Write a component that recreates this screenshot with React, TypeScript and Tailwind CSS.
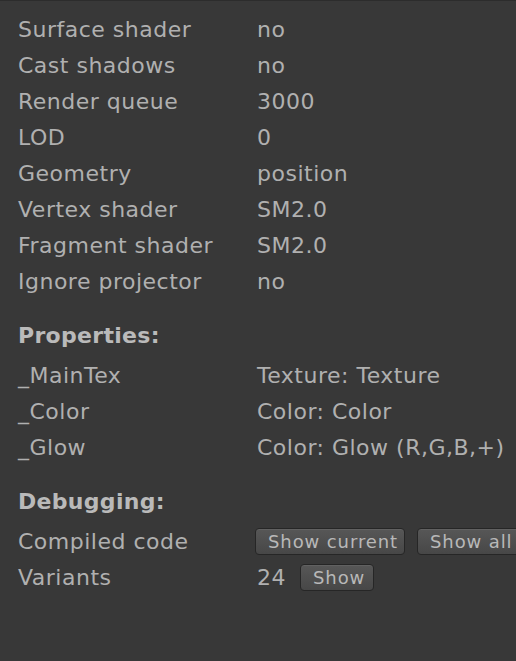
import React from "react";

const font = { fontFamily: '"DejaVu Sans", Verdana, sans-serif' };

function Row({ label, value }: { label: string; value: React.ReactNode }) {
  return (
    <div className="flex h-[36px] items-center">
      <div className="w-[257px] shrink-0 pl-[18px] text-[22px] tracking-[0.5px] text-[#b0b0b0] whitespace-nowrap">
        {label}
      </div>
      <div className="flex items-center text-[22px] tracking-[0.5px] text-[#b0b0b0] whitespace-nowrap">
        {value}
      </div>
    </div>
  );
}

function Header({ title }: { title: string }) {
  return (
    <div className="mt-[18px] mb-[4px] flex h-[36px] items-center">
      <div className="pl-[18px] text-[22px] font-bold tracking-[0.3px] text-[#bababa]">{title}</div>
    </div>
  );
}

function Btn({ children, w }: { children: React.ReactNode; w: string }) {
  return (
    <div
      className={`flex h-[27px] ${w} shrink-0 items-center rounded-[4px] border border-[#262626] bg-gradient-to-b from-[#575757] to-[#474747] pl-[12px] text-[18px] tracking-[0.9px] text-[#b8b8b8] shadow-[inset_0_1px_0_#616161] whitespace-nowrap`}
    >
      {children}
    </div>
  );
}

export default function App() {
  return (
    <div
      className="h-[661px] w-[516px] overflow-hidden border-t border-[#2c2c2c] bg-[#383838] pt-[10px]"
      style={font}
    >
      <Row label="Surface shader" value="no" />
      <Row label="Cast shadows" value="no" />
      <Row label="Render queue" value="3000" />
      <Row label="LOD" value="0" />
      <Row label="Geometry" value="position" />
      <Row label="Vertex shader" value="SM2.0" />
      <Row label="Fragment shader" value="SM2.0" />
      <Row label="Ignore projector" value="no" />

      <Header title="Properties:" />
      <Row label="_MainTex" value="Texture: Texture" />
      <Row label="_Color" value="Color: Color" />
      <Row label="_Glow" value="Color: Glow (R,G,B,+)" />

      <Header title="Debugging:" />
      <div className="flex h-[36px] items-center">
        <div className="w-[255px] shrink-0 pl-[18px] text-[22px] tracking-[0.5px] text-[#b0b0b0] whitespace-nowrap">
          Compiled code
        </div>
        <div className="flex items-center gap-[12px]">
          <Btn w="w-[150px]">Show current</Btn>
          <Btn w="w-[120px]">Show all</Btn>
        </div>
      </div>
      <div className="flex h-[36px] items-center">
        <div className="w-[257px] shrink-0 pl-[18px] text-[22px] tracking-[0.5px] text-[#b0b0b0] whitespace-nowrap">
          Variants
        </div>
        <div className="text-[22px] tracking-[0.5px] text-[#b0b0b0]">24</div>
        <div className="ml-[14px]">
          <Btn w="w-[74px]">Show</Btn>
        </div>
      </div>
    </div>
  );
}
